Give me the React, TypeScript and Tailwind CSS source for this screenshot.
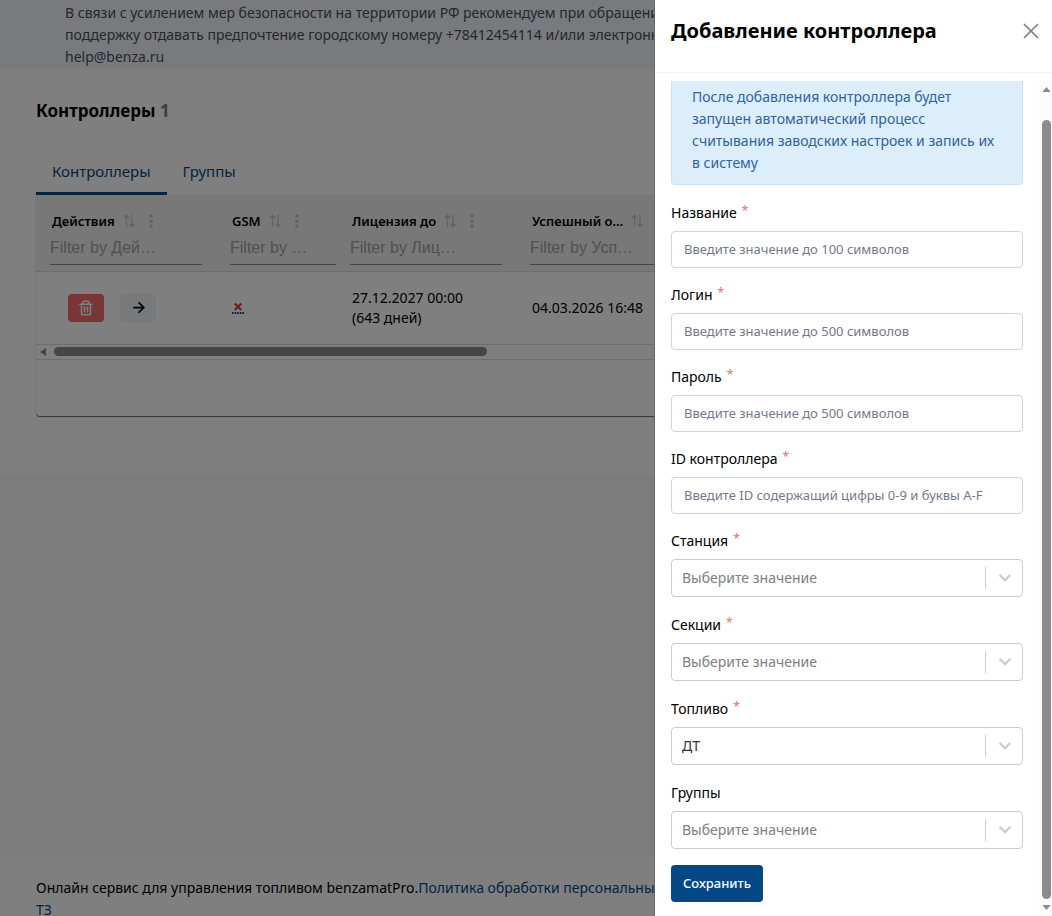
import { BiRightArrowAlt, BiTrash } from "react-icons/bi";

const columns = [
  { title: "Действия", filter: "Filter by Дей…" },
  { title: "GSM", filter: "Filter by …" },
  { title: "Лицензия до", filter: "Filter by Лиц…" },
  { title: "Успешный о…", filter: "Filter by Усп…" },
];

const textFields = [
  { id: "name", label: "Название", placeholder: "Введите значение до 100 символов" },
  { id: "login", label: "Логин", placeholder: "Введите значение до 500 символов" },
  { id: "password", label: "Пароль", placeholder: "Введите значение до 500 символов" },
  { id: "controllerId", label: "ID контроллера", placeholder: "Введите ID содержащий цифры 0-9 и буквы A-F" },
];

const selectFields = [
  { id: "station", label: "Станция", value: "Выберите значение", required: true, filled: false },
  { id: "sections", label: "Секции", value: "Выберите значение", required: true, filled: false },
  { id: "fuel", label: "Топливо", value: "ДТ", required: true, filled: true },
  { id: "groups", label: "Группы", value: "Выберите значение", required: false, filled: false },
];

function SortIcon() {
  return (
    <svg width="12" height="14" viewBox="0 0 12 14" fill="none" stroke="currentColor" strokeWidth="1.3">
      <path d="M3.5 13V1.5M1 4l2.5-2.5L6 4M9 1v11.5M6.5 10L9 12.5l2.5-2.5" />
    </svg>
  );
}

function DotsIcon() {
  return (
    <svg width="4" height="14" viewBox="0 0 4 14" fill="currentColor">
      <circle cx="2" cy="2" r="1.8" />
      <circle cx="2" cy="7" r="1.8" />
      <circle cx="2" cy="12" r="1.8" />
    </svg>
  );
}

function Label({ id, text, required }: { id: string; text: string; required: boolean }) {
  return (
    <label htmlFor={id} className="mb-[7px] flex h-[23px] items-center gap-[5px] text-sm text-black">
      {text}
      {required && <span className="mb-1 text-xs text-[#f46a6a]">*</span>}
    </label>
  );
}

function Banner() {
  return (
    <div className="shrink-0 bg-[#f1f5fd] pt-0.5 pr-16 pb-px pl-[65px] text-sm leading-[22px] whitespace-nowrap text-[#495057]">
      <p>В связи с усилением мер безопасности на территории РФ рекомендуем при обращении</p>
      <p>поддержку отдавать предпочтение городскому номеру +78412454114 и/или электронной</p>
      <p>help@benza.ru</p>
    </div>
  );
}

function ControllersTable() {
  return (
    <div className="overflow-hidden rounded-b bg-white shadow-[0_1px_1px_rgba(0,0,0,0.6)]">
      <table className="w-full table-fixed border-collapse text-left text-sm text-black">
        <colgroup>
          <col className="w-[180px]" />
          <col className="w-[120px]" />
          <col className="w-[180px]" />
          <col className="w-[180px]" />
          <col />
        </colgroup>
        <thead className="bg-[#f0f0f0]">
          <tr className="h-[76px] border-b border-[#d8d8d8] align-top">
            {columns.map((column) => (
              <th key={column.title} className="px-3.5 pt-4 pb-0 font-semibold">
                <div className="flex h-5 items-center text-[13px] whitespace-nowrap">
                  <span className="pl-0.5">{column.title}</span>
                  <span className="ml-2 flex gap-3.5 text-[#c4c4c4]">
                    <SortIcon />
                    <DotsIcon />
                  </span>
                </div>
                <input
                  aria-label={column.filter}
                  placeholder={column.filter}
                  className="block h-[34px] w-full min-w-[106px] border-b border-[#8a8a8a] bg-transparent font-['Liberation_Sans',sans-serif] text-base font-normal outline-none placeholder:text-[#a2a2a2]"
                />
              </th>
            ))}
            <th />
          </tr>
        </thead>
        <tbody>
          <tr className="h-[73px] border-b border-[#dcdcdc]">
            <td className="pl-8">
              <div className="flex gap-4">
                <button aria-label="Удалить" className="flex h-7 w-9 items-center justify-center rounded-sm bg-[#f46a6a] text-white">
                  <BiTrash size={18} />
                </button>
                <button aria-label="Открыть" className="flex h-7 w-9 items-center justify-center rounded-sm bg-[#eff2f7] text-black">
                  <BiRightArrowAlt size={21} />
                </button>
              </div>
            </td>
            <td className="pl-4">
              <svg width="12" height="12" viewBox="0 0 12 12" fill="none">
                <path d="M2.800 1.500l6.500 6.500M9.300 1.500L2.800 8" stroke="#d93a3a" strokeWidth="2.200" />
                <path d="M0 11h12" stroke="#034884" strokeWidth="2" strokeDasharray="1.600 1" />
              </svg>
            </td>
            <td className="pl-4 leading-5">
              27.12.2027 00:00
              <br />
              (643 дней)
            </td>
            <td className="pl-4 whitespace-nowrap">04.03.2026 16:48</td>
            <td />
          </tr>
        </tbody>
      </table>
      <div className="flex h-[15px] items-center gap-2 border-b border-[#dcdcdc] pl-1">
        <svg width="6" height="8" viewBox="0 0 6 8" fill="#8b8b8b">
          <path d="M6 0v8L0 4z" />
        </svg>
        <div className="h-[9px] w-[433px] rounded-full bg-[#8b8b8b]" />
      </div>
      <div className="h-14" />
    </div>
  );
}

function Drawer() {
  return (
    <aside className="fixed inset-y-0 right-0 flex w-[398px] flex-col border-l border-[#666666] bg-white">
      <header className="flex h-[73px] shrink-0 items-center justify-between border-b border-[#eff2f7] pr-[13px] pb-2.5 pl-4">
        <h2 className="text-xl font-bold text-black">Добавление контроллера</h2>
        <button aria-label="Закрыть" className="text-[#7f7f7f]">
          <svg width="16" height="16" viewBox="0 0 16 16" fill="none" stroke="currentColor" strokeWidth="1.7">
            <path d="M1 1l14 14M15 1L1 15" />
          </svg>
        </button>
      </header>
      <div className="mt-2 flex min-h-0 flex-1 gap-4 pl-4">
        <form className="min-w-0 flex-1 overflow-hidden">
          <div className="mb-4 rounded-b border border-t-0 border-[#cbe1f7] bg-[#dcedfc] px-5 pt-[5px] pb-2.5 text-sm leading-[22px] text-[#2f639c]">
            После добавления контроллера будет запущен автоматический процесс считывания заводских настроек и запись их в систему
          </div>
          {textFields.map((field) => (
            <div key={field.id} className="mb-[15px]">
              <Label id={field.id} text={field.label} required />
              <input
                id={field.id}
                placeholder={field.placeholder}
                className="block h-[37px] w-full rounded border border-[#ced4da] px-3 pb-0.5 text-[13px] text-[#495057] outline-none placeholder:text-[#74788d]"
              />
            </div>
          ))}
          {selectFields.map((field) => (
            <div key={field.id} className="mb-4">
              <Label id={field.id} text={field.label} required={field.required} />
              <div className="relative">
                <select
                  id={field.id}
                  className={`block h-[38px] w-full appearance-none rounded border border-[#cccccc] bg-white px-2.5 text-sm ${field.filled ? "text-[#333333]" : "text-[#808080]"}`}
                >
                  <option>{field.value}</option>
                </select>
                <span className="pointer-events-none absolute inset-y-2 right-0 flex w-[38px] items-center justify-center border-l border-[#cccccc] text-[#cccccc]">
                  <svg width="12" height="8" viewBox="0 0 12 8" fill="none" stroke="currentColor" strokeWidth="2.4" strokeLinecap="round">
                    <path d="M1.3 1.5L6 6l4.7-4.5" />
                  </svg>
                </span>
              </div>
            </div>
          ))}
          <button type="button" className="h-[37px] rounded bg-[#034884] px-3 text-[13px] font-medium text-white">
            Сохранить
          </button>
        </form>
        <div className="flex w-[13px] shrink-0 flex-col items-end bg-[#fcfcfc] pr-px">
          <svg width="9" height="5" viewBox="0 0 10 6" fill="#8b8b8b" className="mt-1.5 shrink-0">
            <path d="M0 6h10L5 0z" />
          </svg>
          <div className="mt-7 w-[9px] flex-1 rounded-full bg-[#8b8b8b]" />
          <svg width="9" height="5" viewBox="0 0 10 6" fill="#8b8b8b" className="my-1.5 shrink-0">
            <path d="M0 0h10L5 6z" />
          </svg>
        </div>
      </div>
    </aside>
  );
}

export default function App() {
  return (
    <div className="flex h-screen flex-col overflow-hidden bg-[#f8f8fb] font-['Noto_Sans',sans-serif]">
      <Banner />
      <main className="min-h-[788px] shrink-0">
        <section className="bg-white px-9 pt-7 pb-[59px]">
          <h1 className="text-[17px] leading-7 font-bold text-black">
            Контроллеры <span className="text-[#74788d]">1</span>
          </h1>
          <nav className="mt-[26px] flex h-11 text-[15px] text-[#034884]">
            <a href="#controllers" className="flex items-center border-b-3 border-[#034884] px-4">Контроллеры</a>
            <a href="#groups" className="flex items-center border-b-3 border-transparent px-4">Группы</a>
          </nav>
          <ControllersTable />
        </section>
      </main>
      <footer className="shrink-0 bg-white px-9 py-5 text-sm leading-[22px] whitespace-nowrap text-black">
        <p>
          Онлайн сервис для управления топливом benzamatPro.
          <a href="#policy" className="text-[#034884]">Политика обработки персональных</a>
        </p>
        <a href="#terms" className="text-[#034884]">ТЗ</a>
      </footer>
      <div className="fixed inset-0 bg-black/50" />
      <Drawer />
    </div>
  );
}
